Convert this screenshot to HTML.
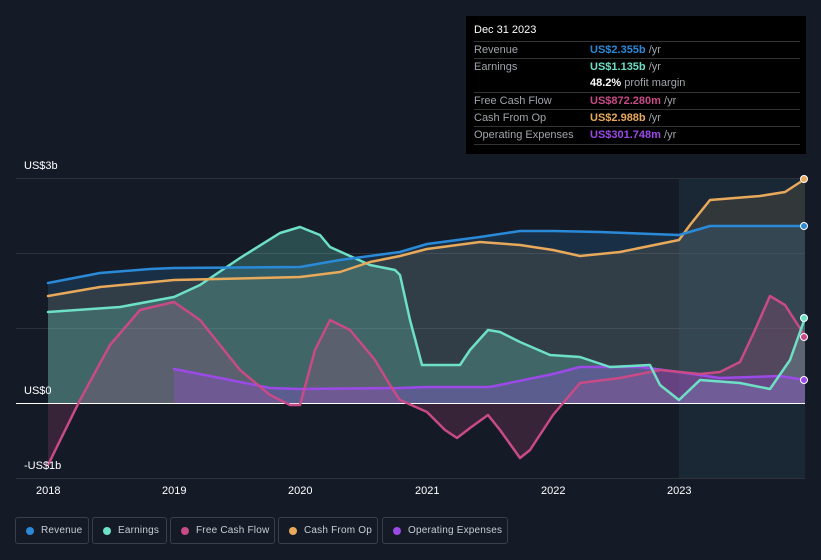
<!DOCTYPE html>
<html><head><style>
html,body{margin:0;width:821px;height:560px;background:#151b26;font-family:"Liberation Sans",sans-serif;overflow:hidden;position:relative}
.tip{position:absolute;left:466px;top:16px;width:340px;height:138px;background:#000;color:#fff;font-size:11px}
.tip .r{position:absolute;left:8px;right:6px;height:17px;border-top:1px solid #333;line-height:17px;color:#a0a4ab}
.tip .r b{font-weight:bold}
.tip .v{position:absolute;left:116px}
.leg{position:absolute;top:517px;height:27px;border:1px solid #3a404b;border-radius:3px;color:#c8ccd2;font-size:10px;line-height:26px;box-sizing:border-box;white-space:nowrap}
.leg i{position:absolute;left:10px;top:9px;width:8px;height:8px;border-radius:50%}
.leg span{position:absolute;left:25px;white-space:nowrap;letter-spacing:0.2px}
.ax{position:absolute;color:#fff;font-size:11px}
</style></head><body>
<svg width="821" height="560" style="position:absolute;left:0;top:0">
<rect x="679" y="178" width="126" height="300" fill="#1b2a3a" opacity="0.8"/>
<g stroke="#2c323c" stroke-width="1">
<line x1="16" y1="178.5" x2="805" y2="178.5"/><line x1="16" y1="253.5" x2="805" y2="253.5"/><line x1="16" y1="328.5" x2="805" y2="328.5"/><line x1="16" y1="478.5" x2="805" y2="478.5"/>
</g>
<polygon fill="#2a8ad8" opacity="0.18" points="48,403 48,283 100,273 150,269 174,268 300,267 340,260 400,252 427,244 480,237 520,231 553,231 600,232 679,235 710,226 770,226 805,226 805,403"/>
<polygon fill="#e8a95a" opacity="0.12" points="48,403 48,296 100,287 174,280 300,277 340,272 370,262 400,256 427,249 480,242 520,245 553,250 580,256 620,252 679,240 690,225 710,200 760,196 785,192 805,179 805,403"/>
<polygon fill="#6ee0c6" opacity="0.25" points="48,403 48,312 120,307 174,297 200,285 240,258 280,233 300,227 320,235 330,247 370,265 395,270 400,275 410,320 422,365 460,365 470,350 488,330 500,332 520,342 550,355 580,357 610,367 650,365 660,385 679,400 700,380 740,383 770,389 790,360 805,318 805,403"/>
<polygon fill="#c84a86" opacity="0.2" points="48,465 80,400 110,345 140,310 174,302 200,320 240,370 270,395 290,405 300,405 315,350 330,320 350,330 375,360 390,385 400,400 427,412 445,430 457,438 470,428 488,415 500,430 520,458 530,450 553,415 580,383 620,378 660,370 700,374 720,372 740,362 755,330 770,296 785,305 805,336 805,403 48,403"/>
<polygon fill="#9b4ae8" opacity="0.3" points="174,403 174,369 230,380 270,388 300,389 400,388 427,387 490,387 553,374 580,367 640,367 679,372 720,378 780,376 805,380 805,403"/>
<line x1="16" y1="403.5" x2="805" y2="403.5" stroke="#fff" stroke-width="1"/>
<g fill="none" stroke-width="2.5" stroke-linejoin="round" stroke-linecap="round">
<polyline stroke="#9b4ae8" points="174,369 230,380 270,388 300,389 400,388 427,387 490,387 553,374 580,367 640,367 679,372 720,378 780,376 805,380"/>
<polyline stroke="#c84a86" points="48,465 80,400 110,345 140,310 174,302 200,320 240,370 270,395 290,405 300,405 315,350 330,320 350,330 375,360 390,385 400,400 427,412 445,430 457,438 470,428 488,415 500,430 520,458 530,450 553,415 580,383 620,378 660,370 700,374 720,372 740,362 755,330 770,296 785,305 805,336"/>
<polyline stroke="#6ee0c6" points="48,312 120,307 174,297 200,285 240,258 280,233 300,227 320,235 330,247 370,265 395,270 400,275 410,320 422,365 460,365 470,350 488,330 500,332 520,342 550,355 580,357 610,367 650,365 660,385 679,400 700,380 740,383 770,389 790,360 805,318"/>
<polyline stroke="#e8a95a" points="48,296 100,287 174,280 300,277 340,272 370,262 400,256 427,249 480,242 520,245 553,250 580,256 620,252 679,240 690,225 710,200 760,196 785,192 805,179"/>
<polyline stroke="#2a8ad8" points="48,283 100,273 150,269 174,268 300,267 340,260 400,252 427,244 480,237 520,231 553,231 600,232 679,235 710,226 770,226 805,226"/>
</g>
<g stroke="#fff" stroke-width="1">
<circle cx="804" cy="179" r="3.5" fill="#e8a95a"/><circle cx="804" cy="226" r="3.5" fill="#2a8ad8"/><circle cx="804" cy="318" r="3.5" fill="#6ee0c6"/><circle cx="804" cy="337" r="3.5" fill="#c84a86"/><circle cx="804" cy="380" r="3.5" fill="#9b4ae8"/>
</g>
</svg>
<div class="ax" style="left:24px;top:160px">US$3b</div>
<div class="ax" style="left:24px;top:385px">US$0</div>
<div class="ax" style="left:24px;top:460px">-US$1b</div>
<div class="ax" style="left:36px;top:485px">2018</div>
<div class="ax" style="left:162px;top:485px">2019</div>
<div class="ax" style="left:288px;top:485px">2020</div>
<div class="ax" style="left:415px;top:485px">2021</div>
<div class="ax" style="left:541px;top:485px">2022</div>
<div class="ax" style="left:667px;top:485px">2023</div>
<div class="tip">
<div style="position:absolute;left:8px;top:8px;color:#fff">Dec 31 2023</div>
<div class="r" style="top:25px">Revenue<span class="v"><b style="color:#2a8ad8">US$2.355b</b> /yr</span></div>
<div class="r" style="top:42px">Earnings<span class="v"><b style="color:#6ee0c6">US$1.135b</b> /yr</span></div>
<div class="r" style="top:59px;border-top:none"><span class="v"><b style="color:#fff">48.2%</b> profit margin</span></div>
<div class="r" style="top:76px">Free Cash Flow<span class="v"><b style="color:#c84a86">US$872.280m</b> /yr</span></div>
<div class="r" style="top:93px">Cash From Op<span class="v"><b style="color:#e8a95a">US$2.988b</b> /yr</span></div>
<div class="r" style="top:110px">Operating Expenses<span class="v"><b style="color:#9b4ae8">US$301.748m</b> /yr</span></div>
<div class="r" style="top:128px;height:0"></div>
</div>
<div class="leg" style="left:15px;width:74px"><i style="background:#2a8ad8"></i><span>Revenue</span></div>
<div class="leg" style="left:92px;width:75px"><i style="background:#6ee0c6"></i><span>Earnings</span></div>
<div class="leg" style="left:170px;width:105px"><i style="background:#c84a86"></i><span>Free Cash Flow</span></div>
<div class="leg" style="left:278px;width:100px"><i style="background:#e8a95a"></i><span>Cash From Op</span></div>
<div class="leg" style="left:382px;width:126px"><i style="background:#9b4ae8"></i><span>Operating Expenses</span></div>
</body></html>
